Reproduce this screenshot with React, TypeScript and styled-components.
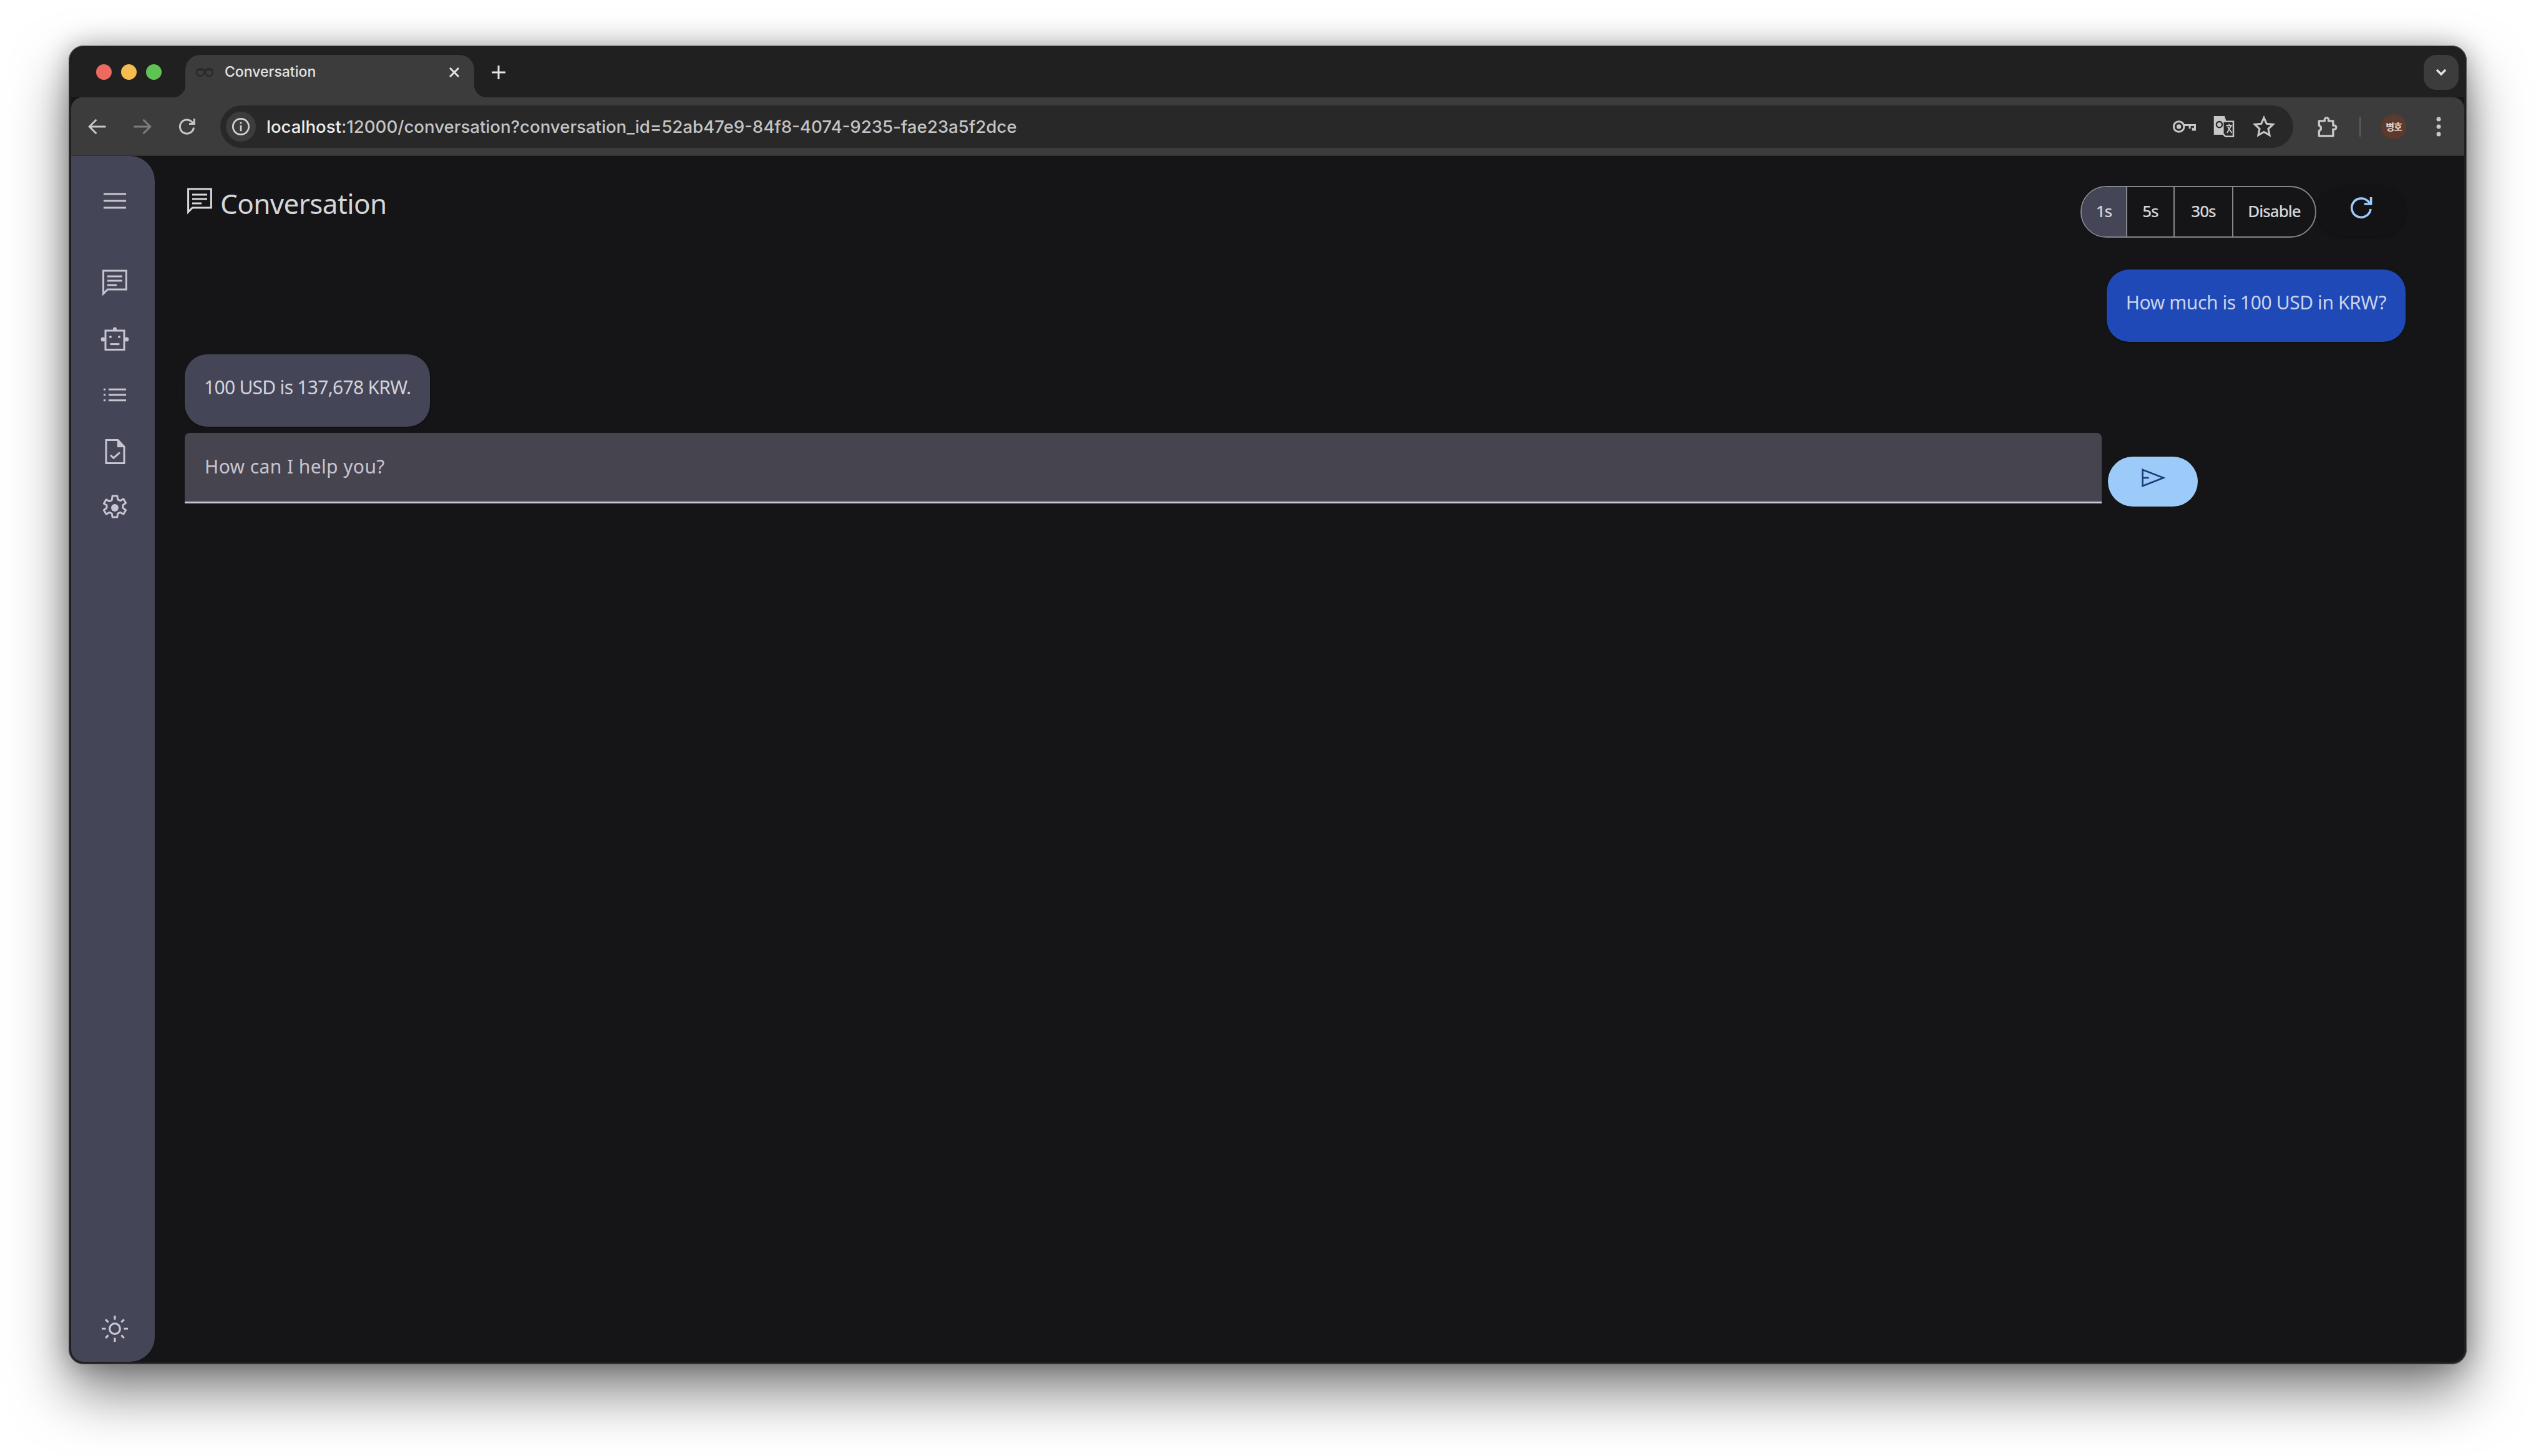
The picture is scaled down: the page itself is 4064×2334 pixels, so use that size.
import React from "react";
import styled, { createGlobalStyle } from "styled-components";

const Global = createGlobalStyle`
  html, body { margin: 0; padding: 0; background: #fff; }
  body { width: 4064px; height: 2334px; overflow: hidden; font-family: "Noto Sans", "Noto Sans CJK KR", sans-serif; }
`;

const Stage = styled.div`
  width: 4064px;
  height: 2334px;
  padding: 73px 111px 147px 110px;
  box-sizing: border-box;
  background: #fff;
`;
const Win = styled.div`
  width: 100%;
  height: 100%;
  box-sizing: border-box;
  border: 4px solid #202020;
  outline: 1px solid #5c5c5c;
  outline-offset: -1px;
  border-radius: 24px;
  background: #151517;
  overflow: hidden;
  display: flex;
  flex-direction: column;
  box-shadow: 0 44px 90px rgba(0,0,0,.5), 0 0 40px rgba(0,0,0,.28);
`;
const TabStrip = styled.div`
  height: 79px;
  flex: none;
  background: #202020;
  display: flex;
  align-items: flex-end;
  padding-left: 40px;
`;
const Lights = styled.div`
  display: flex;
  gap: 15px;
  align-self: flex-start;
  margin-top: 26px;
`;
const Light = styled.span<{ $c: string }>`
  width: 25px; height: 25px; border-radius: 50%;
  background: ${p => p.$c};
`;
const Tab = styled.div`
  position: relative;
  margin-left: 38px;
  width: 463px;
  height: 68px;
  background: #3c3c3c;
  border-radius: 24px 24px 0 0;
  display: flex;
  align-items: flex-start;
  padding: 11px 18px 0 16px;
  box-sizing: border-box;
  color: #e3e3e3;
  font: 500 23px/32px "Inter", sans-serif;
  &::before, &::after {
    content: "";
    position: absolute;
    bottom: 0;
    width: 20px;
    height: 20px;
  }
  &::before { left: -20px; background: radial-gradient(circle at 0 0, transparent 20px, #3c3c3c 20.5px); }
  &::after { right: -20px; background: radial-gradient(circle at 100% 0, transparent 20px, #3c3c3c 20.5px); }
`;
const Favicon = styled.svg`
  margin-top: 1px;
  flex: none;
`;
const TabTitle = styled.span`
  margin-left: 17px;
  flex: 1;
`;
const TabClose = styled.svg`
  margin-top: 3px;
  flex: none;
`;
const Plus = styled.div`
  margin: 25px 0 0 25px;
  width: 28px;
  height: 28px;
  align-self: flex-start;
  color: #e3e3e3;
`;
const ChevronPill = styled.div`
  margin-left: auto;
  margin-right: 9px;
  align-self: flex-start;
  margin-top: 11px;
  width: 56px;
  height: 56px;
  border-radius: 20px;
  background: #3c3c3c;
  display: flex;
  align-items: center;
  justify-content: center;
  color: #e3e3e3;
`;
const Toolbar = styled.div`
  height: 94px;
  flex: none;
  background: #3c3c3c;
  border-radius: 18px 18px 0 0;
  display: flex;
  align-items: center;
  color: #c7c7c7;
  box-shadow: inset 0 -2px 0 #333;
`;
const NavGroup = styled.div`
  display: flex;
  gap: 36px;
  margin-left: 24px;
  margin-right: 35px;
`;
const NavDim = styled.span`
  color: #7f7f7f;
`;
const Omni = styled.div`
  flex: 1;
  height: 68px;
  background: #282828;
  border-radius: 34px;
  display: flex;
  align-items: center;
  padding: 0 27px 0 9px;
`;
const Info = styled.div`
  width: 48px;
  height: 48px;
  border-radius: 50%;
  background: #3c3c3c;
  display: flex;
  align-items: center;
  justify-content: center;
  color: #d4d4d4;
`;
const Url = styled.div`
  margin-left: 17px;
  flex: 1;
  font: 500 27.6px/32px "Inter", sans-serif;
  color: #c4c4c4;
  white-space: nowrap;
  b { font-weight: 500; color: #ececec; }
`;
const OmniIcons = styled.div`
  display: flex;
  gap: 24px;
  color: #c7c7c7;
`;
const ToolRight = styled.div`
  display: flex;
  align-items: center;
  width: 274px;
  flex: none;
  padding-left: 33px;
  box-sizing: border-box;
`;
const Divider = styled.span`
  width: 2px;
  height: 32px;
  background: #5f5f5f;
  margin: 0 33px 0 33px;
`;
const Avatar = styled.div`
  width: 40px;
  height: 40px;
  border-radius: 50%;
  background: #5c3a2e;
  color: #ead9d2;
  font: 700 15px/40px "Noto Sans CJK KR", sans-serif;
  text-align: center;
  letter-spacing: -1px;
  margin-right: 46px;
`;
const Body = styled.div`
  flex: 1;
  display: flex;
  min-height: 0;
`;
const Rail = styled.nav`
  width: 134px;
  flex: none;
  background: #444557;
  border-radius: 0 40px 40px 0;
  display: flex;
  flex-direction: column;
  align-items: center;
  padding: 48px 0 29px 6px;
  box-sizing: border-box;
  color: #c7c5d0;
`;
const RailGroup = styled.div`
  margin-top: 82px;
  display: flex;
  flex-direction: column;
  gap: 42.5px;
`;
const RailBottom = styled.div`
  margin-top: auto;
`;
const Main = styled.main`
  flex: 1;
  min-width: 0;
  padding: 48px 94px 0 48px;
  display: flex;
  flex-direction: column;
  color: #c7c5d0;
`;
const Header = styled.header`
  display: flex;
  align-items: flex-start;
  height: 134px;
  flex: none;
`;
const HeadIcon = styled.div`
  width: 48px;
  height: 48px;
  margin-top: -1px;
  color: #d8d8dc;
`;
const Title = styled.h1`
  margin: 4px 0 0 9px;
  font: 400 44px/48px "Noto Sans", sans-serif;
  letter-spacing: -0.6px;
  color: #d5d5da;
`;
const Controls = styled.div`
  margin-left: auto;
  display: flex;
  align-items: flex-start;
`;
const Toggle = styled.div`
  height: 83px;
  width: 378px;
  box-sizing: border-box;
  border: 2px solid #85858e;
  border-radius: 42px;
  overflow: hidden;
  display: flex;
`;
const ToggleBtn = styled.div<{ $w: number; $on?: boolean }>`
  width: ${p => p.$w}px;
  flex: none;
  box-sizing: border-box;
  background: ${p => (p.$on ? "#444557" : "transparent")};
  border-left: ${p => (p.$on ? "0" : "2px solid #85858e")};
  display: flex;
  align-items: center;
  justify-content: center;
  padding-bottom: 3px;
  font: 500 26px/32px "Noto Sans", sans-serif;
  letter-spacing: -1px;
  color: #d5d5da;
`;
const RefreshBtn = styled.div`
  width: 143px;
  height: 80px;
  border-radius: 40px;
  display: flex;
  align-items: center;
  justify-content: center;
  color: #9ccbfa;
  background: #131315;
  box-shadow: 0 2px 4px rgba(0,0,0,.25);
  padding-bottom: 10px;
  box-sizing: border-box;
`;
const Thread = styled.div`
  display: flex;
  flex-direction: column;
`;
const Bubble = styled.div<{ $me?: boolean }>`
  align-self: ${p => (p.$me ? "flex-end" : "flex-start")};
  height: 116px;
  box-sizing: border-box;
  padding: 31px 31px 0 31px;
  border-radius: 36px;
  background: ${p => (p.$me ? "#1f49b6" : "#444557")};
  color: ${p => (p.$me ? "#c9d3ee" : "#d3d3dc")};
  font: 400 30px/44px "Noto Sans", sans-serif;
  letter-spacing: ${p => (p.$me ? "-0.42px" : "-0.72px")};
  white-space: nowrap;
  box-shadow: 0 1px 3px rgba(0,0,0,.4);
  margin-bottom: 20px;
`;
const Composer = styled.div`
  display: flex;
  align-items: flex-end;
  margin-top: -10px;
  padding-right: 333px;
`;
const Field = styled.div`
  flex: 1;
  height: 113px;
  box-sizing: border-box;
  background: #46444e;
  border-bottom: 3px solid #c9c5d0;
  border-radius: 8px 8px 0 0;
  padding: 32px 32px 0;
  font: 400 30px/44px "Noto Sans", sans-serif;
  letter-spacing: 0.4px;
  color: #c9c5d0;
`;
const SendBtn = styled.div`
  width: 144px;
  height: 80px;
  margin: 0 0 -5px 10px;
  border-radius: 40px;
  background: #9ccbfa;
  color: #1c3a7a;
  display: flex;
  align-items: flex-start;
  justify-content: center;
  padding-top: 10px;
  box-sizing: border-box;
`;
const IconSvg = styled.svg`
  display: block;
`;

type IP = { size?: number; sw?: number; round?: boolean; children: React.ReactNode };
const Ico = ({ size = 48, sw = 1.5, round, children }: IP) => (
  <IconSvg width={size} height={size} viewBox="0 0 24 24" fill="none" stroke="currentColor" strokeWidth={sw} strokeLinejoin={round ? "round" : "miter"}>{children}</IconSvg>
);

const ChatIcon = () => (
  <Ico><path d="M2.8 3h18.4v15H6.2l-3.4 3.4zM6 7.500h12M6 11h12M6 14.500h7.500" /></Ico>
);

export default function App() {
  return (
    <Stage>
      <Global />
      <Win>
        <TabStrip>
          <Lights>
            <Light $c="#ee6a5f" /><Light $c="#f5bd4f" /><Light $c="#5fc454" />
          </Lights>
          <Tab>
            <Favicon width="30" height="30" viewBox="0 0 30 30" fill="none" stroke="#2b2b2b" strokeWidth="2.500">
              <circle cx="8" cy="16" r="6" /><circle cx="22" cy="16" r="6" /><path d="M2 12h26" />
            </Favicon>
            <TabTitle>Conversation</TabTitle>
            <TabClose width="28" height="28" viewBox="0 0 28 28" stroke="#e3e3e3" strokeWidth="3"><path d="M7 7l14 14M21 7L7 21" /></TabClose>
          </Tab>
          <Plus>
            <svg width="28" height="28" viewBox="0 0 28 28" stroke="currentColor" strokeWidth="3"><path d="M14 3v22M3 14h22" /></svg>
          </Plus>
          <ChevronPill>
            <svg width="24" height="24" viewBox="0 0 24 24" fill="none" stroke="currentColor" strokeWidth="3.500"><path d="M5 8l7 7 7-7" /></svg>
          </ChevronPill>
        </TabStrip>
        <Toolbar>
          <NavGroup>
            <Ico size={36} sw={2}><path d="M21 12H4M11 4.500L3.500 12l7.500 7.500" /></Ico>
            <NavDim>
              <Ico size={36} sw={2}><path d="M3 12h17M13 4.500l7.500 7.500-7.500 7.500" /></Ico>
            </NavDim>
            <Ico size={36} sw={2}><path d="M19 13a7.400 7.400 0 1 1-2.200-6.300L19.500 9M19.500 3.500V9H14" /></Ico>
          </NavGroup>
          <Omni>
            <Info>
              <Ico size={32} sw={2}><circle cx="12" cy="12" r="9.500" /><path d="M12 10.500v7M12 6.500v2.200" /></Ico>
            </Info>
            <Url><b>localhost</b>:12000/conversation?conversation_id=52ab47e9-84f8-4074-9235-fae23a5f2dce</Url>
            <OmniIcons>
              <Ico size={40} sw={1.8}><circle cx="7" cy="12" r="5" /><circle cx="7" cy="12" r="1.300" fill="currentColor" /><path d="M12 10.500h10.500v4.500h-2v-2M17.500 11v3" /></Ico>
              <Ico size={40} sw={1.5}><path d="M3 2.500h9l1 3v13.500H3z" fill="currentColor" /><path d="M11 7h10v14.500H13.500L11 19z" fill="#282828" /><path d="M14 11h6M17 9.500v1.500M15 18l4-7M15.500 12l4 6" strokeWidth="1.200" /><circle cx="7.500" cy="10" r="2.800" stroke="#282828" strokeWidth="1.400" /></Ico>
              <Ico size={40} sw={1.9}><path d="M12 3.500l2.600 5.700 6.100.7-4.500 4.200 1.200 6.100-5.400-3.100-5.400 3.100 1.200-6.100-4.500-4.200 6.100-.7z" /></Ico>
            </OmniIcons>
          </Omni>
          <ToolRight>
            <Ico size={40} sw={2} round><path d="M5 6.500h5.500a2 2 0 1 1 3.500 0H18.500V11a2 2 0 1 1 0 3.500v6.500H5v-5a2.600 2.600 0 0 0 0-5z" /></Ico>
            <Divider />
            <Avatar>병호</Avatar>
            <svg width="12" height="40" viewBox="0 0 12 40" fill="currentColor"><circle cx="6" cy="8" r="3.500" /><circle cx="6" cy="20" r="3.500" /><circle cx="6" cy="32" r="3.500" /></svg>
          </ToolRight>
        </Toolbar>
        <Body>
          <Rail>
            <Ico><path d="M3 6.500h18M3 12h18M3 17.500h18" /></Ico>
            <RailGroup>
              <ChatIcon />
              <Ico>
                <path d="M4.500 5.500h15v15.300h-15z" />
                <circle cx="12" cy="4.200" r="1.500" fill="currentColor" stroke="none" />
                <circle cx="2.500" cy="12.500" r="1.700" fill="currentColor" stroke="none" />
                <circle cx="21.500" cy="12.500" r="1.700" fill="currentColor" stroke="none" />
                <circle cx="8.500" cy="10.500" r="1" fill="currentColor" stroke="none" />
                <circle cx="15.500" cy="10.500" r="1" fill="currentColor" stroke="none" />
                <path d="M8.300 16.300h7.400" />
              </Ico>
              <Ico><path d="M7 7.600h14M7 12h14M7 16.400h14M3 7.600h1.600M3 12h1.600M3 16.400h1.600" /></Ico>
              <Ico>
                <path d="M5 2.800h9.500L19.500 8v13.300H5z" />
                <path d="M14 2.800L19.500 8.500H14z" fill="currentColor" stroke="none" />
                <path d="M8.500 14.800l2.500 2.300 5-4.400" />
              </Ico>
              <Ico round>
                <circle cx="12" cy="12" r="3" fill="currentColor" stroke="none" />
                <path d="M10.100 2.500h3.800l.5 2.900 2 .9 2.500-1.400 1.900 3.200-2.300 1.800v2.200l2.300 1.800-1.900 3.200-2.500-1.400-2 .9-.5 2.900h-3.800l-.5-2.900-2-.9-2.500 1.400-1.900-3.200 2.300-1.800v-2.200L3.200 8.600l1.900-3.200 2.500 1.400 2-.9z" />
              </Ico>
            </RailGroup>
            <RailBottom>
              <Ico sw={1.6}><circle cx="12" cy="12" r="4.200" /><path d="M12 1.500v3.300M12 19.200v3.300M1.500 12h3.300M19.200 12h3.300M4.600 4.600l2.200 2.200M17.200 17.200l2.200 2.200M4.600 19.400l2.200-2.200M17.200 6.800l2.200-2.200" /></Ico>
            </RailBottom>
          </Rail>
          <Main>
            <Header>
              <HeadIcon><ChatIcon /></HeadIcon>
              <Title>Conversation</Title>
              <Controls>
                <Toggle>
                  <ToggleBtn $w={71} $on>1s</ToggleBtn>
                  <ToggleBtn $w={76}>5s</ToggleBtn>
                  <ToggleBtn $w={94}>30s</ToggleBtn>
                  <ToggleBtn $w={133}>Disable</ToggleBtn>
                </Toggle>
                <RefreshBtn>
                  <Ico sw={1.800}><path d="M19.500 13a7.600 7.600 0 1 1-2.300-6.400L19.800 9M19.800 3.500V9h-5.500" /></Ico>
                </RefreshBtn>
              </Controls>
            </Header>
            <Thread>
              <Bubble $me>How much is 100 USD in KRW?</Bubble>
              <Bubble>100 USD is 137,678 KRW.</Bubble>
            </Thread>
            <Composer>
              <Field>How can I help you?</Field>
              <SendBtn>
                <Ico sw={1.300}><path d="M3.800 5.500L20.500 12 3.800 18.500zM3.800 12h5" /></Ico>
              </SendBtn>
            </Composer>
          </Main>
        </Body>
      </Win>
    </Stage>
  );
}
